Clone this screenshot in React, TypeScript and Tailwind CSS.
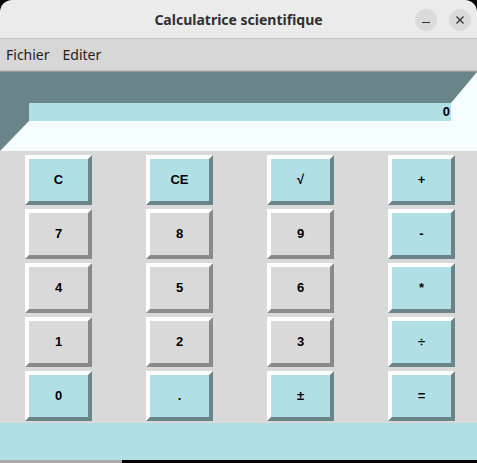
import React from "react";

const rows: { label: string; blue: boolean }[][] = [
  [
    { label: "C", blue: true },
    { label: "CE", blue: true },
    { label: "√", blue: true },
    { label: "+", blue: true },
  ],
  [
    { label: "7", blue: false },
    { label: "8", blue: false },
    { label: "9", blue: false },
    { label: "-", blue: true },
  ],
  [
    { label: "4", blue: false },
    { label: "5", blue: false },
    { label: "6", blue: false },
    { label: "*", blue: true },
  ],
  [
    { label: "1", blue: false },
    { label: "2", blue: false },
    { label: "3", blue: false },
    { label: "÷", blue: true },
  ],
  [
    { label: "0", blue: true },
    { label: ".", blue: true },
    { label: "±", blue: true },
    { label: "=", blue: true },
  ],
];

function Key({ label, blue }: { label: string; blue: boolean }) {
  return (
    <div
      className={
        blue
          ? "w-[67px] h-[50px] border-[4px] border-t-white border-l-white border-b-[#6a8589] border-r-[#6a8589] bg-[#b0dfe5] flex items-center justify-center text-[13px] font-bold text-black"
          : "w-[67px] h-[50px] border-[4px] border-t-white border-l-white border-b-[#8a8a8a] border-r-[#8a8a8a] bg-[#d9d9d9] flex items-center justify-center text-[13px] font-bold text-black"
      }
      style={{ fontFamily: '"Liberation Sans", Arial, sans-serif' }}
    >
      {label}
    </div>
  );
}

export default function App() {
  return (
    <div className="w-[477px] h-[463px] bg-black overflow-hidden flex flex-col">
      <div className="rounded-t-[12px] overflow-hidden flex flex-col">
        <div className="h-[38px] bg-[#ebebeb] flex items-center relative">
          <div
            className="flex-1 text-center text-[14px] font-bold text-[#303030]"
            style={{ fontFamily: '"Noto Sans", "DejaVu Sans", sans-serif' }}
          >
            Calculatrice scientifique
          </div>
          <div className="absolute right-[6px] top-[9px] flex gap-[12px]">
            <div className="w-[22px] h-[22px] rounded-full bg-[#dadada] flex items-center justify-center">
              <div className="w-[8px] h-[1px] bg-[#333] mt-[4px]" />
            </div>
            <div className="w-[22px] h-[22px] rounded-full bg-[#dadada] flex items-center justify-center">
              <svg width="10" height="10" viewBox="0 0 10 10">
                <path d="M1.5 1.5 L8.5 8.5 M8.5 1.5 L1.5 8.5" stroke="#333" strokeWidth="1.3" />
              </svg>
            </div>
          </div>
        </div>
        <div className="h-[1px] bg-[#c4c4c4]" />
        <div
          className="h-[31px] bg-[#d7d7d7] flex items-center gap-[13px] pl-[6px] text-[14px] text-[#222]"
          style={{ fontFamily: '"Noto Sans", "DejaVu Sans", sans-serif' }}
        >
          <span>Fichier</span>
          <span>Editer</span>
        </div>
        <div className="h-[1px] bg-[#c0c0c0]" />
        <div className="h-[1px] bg-[#9a9a9a]" />
        <div className="border-t-[31px] border-l-[29px] border-b-[30px] border-r-[26px] border-t-[#6a8589] border-l-[#6a8589] border-b-[#f4fefe] border-r-[#f4fefe]">
          <div
            className="h-[18px] bg-[#b0dfe5] flex items-center justify-end pr-[1px] text-[13px] font-bold text-black"
            style={{ fontFamily: '"Liberation Sans", Arial, sans-serif' }}
          >
            0
          </div>
        </div>
        <div className="bg-[#d9d9d9] pt-[4px] pb-[2px] pl-[25px] flex flex-col gap-[4px]">
          {rows.map((row, i) => (
            <div key={i} className="flex gap-[54px]">
              {row.map((k) => (
                <Key key={k.label} label={k.label} blue={k.blue} />
              ))}
            </div>
          ))}
        </div>
        <div className="h-[37px] bg-[#b0dfe5]" />
      </div>
      <div className="flex h-[3px]">
        <div className="w-[122px] bg-[#a8a8a8]" />
        <div className="flex-1 bg-black" />
      </div>
    </div>
  );
}
